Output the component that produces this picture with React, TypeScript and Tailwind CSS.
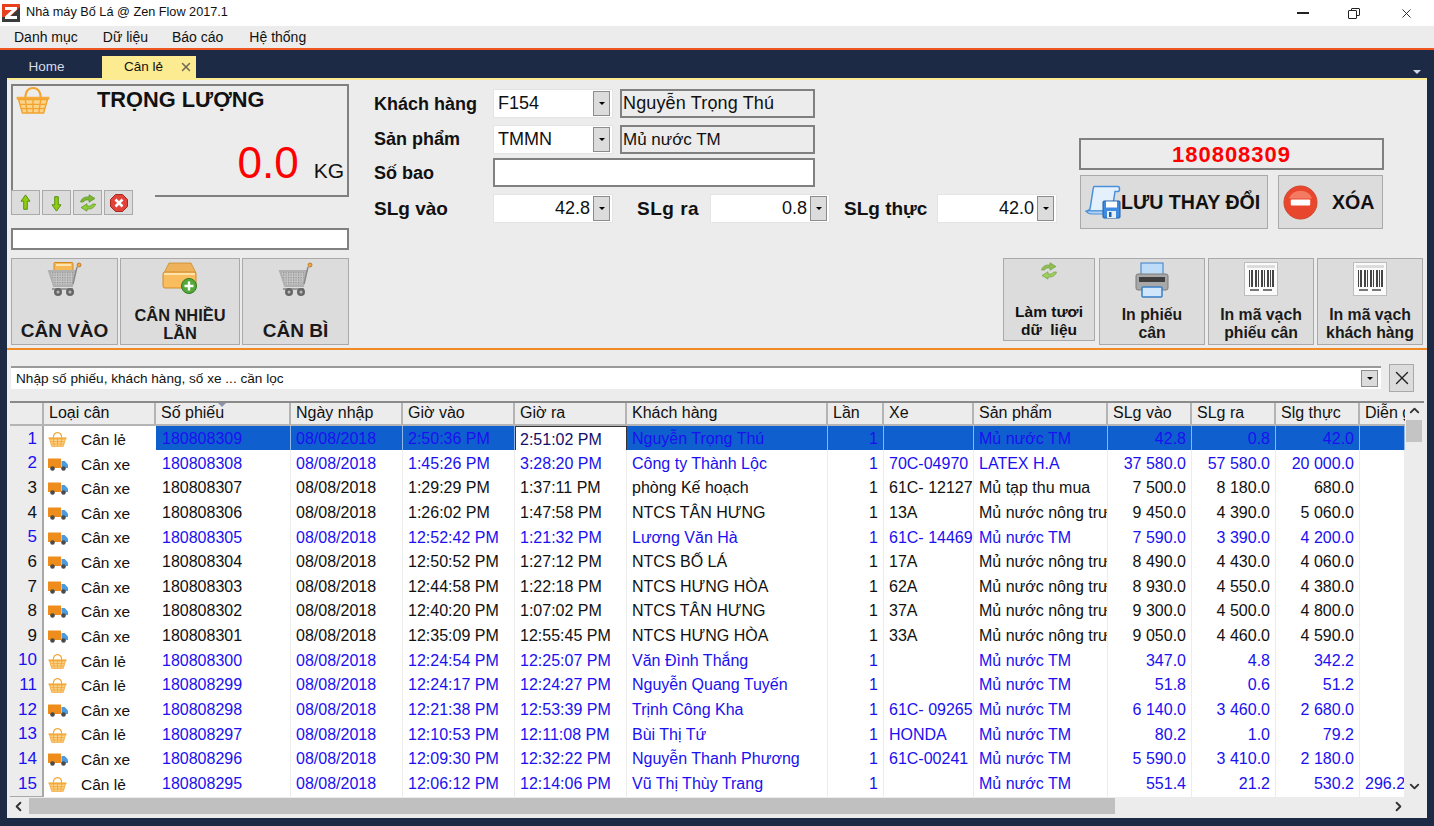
import { useId } from "react";
import { ChevronDown, ChevronLeft, ChevronRight, ChevronUp, X } from "lucide-react";

const sans = { fontFamily: '"Liberation Sans", Arial, sans-serif' };

function Logo() {
  return (
    <svg viewBox="0 0 18 18" className="h-[18px] w-[18px] shrink-0">
      <rect width="18" height="18" fill="#3a3a3a" />
      <path d="M0 0h18v3L8 13H0z" fill="#e8401f" />
      <path d="M3 3h12v2.500L8 12h7v3H3v-2.500L10 6H3z" fill="#fff" />
    </svg>
  );
}

function Basket({ className }: { className?: string }) {
  return (
    <svg viewBox="0 0 36 28" className={className} fill="none">
      <path d="M10 12C10 3 14 1 18 1s8 2 8 11" stroke="#f2a32e" strokeWidth="2" />
      <path d="M1 10h34v3H1z" fill="#f5ab3c" />
      <path d="M3 13h30l-4 14H7z" fill="#fbd38a" stroke="#f2a32e" strokeWidth="1.5" />
      <path d="M10 13l2 14M18 13v14M26 13l-2 14M5 18h26M6 22.500h24" stroke="#f2a32e" strokeWidth="1.4" />
    </svg>
  );
}

function Truck() {
  return (
    <svg viewBox="0 0 20 13" className="h-[13px] w-[20px]">
      <rect x="0" y="0.500" width="13" height="9.500" rx="0.500" fill="#ee8d1b" />
      <path d="M13.500 3h3.200L20 6.500V10h-6.500z" fill="#4d9bdf" />
      <circle cx="4.500" cy="10.500" r="2.300" fill="#4a4a4a" />
      <circle cx="15.500" cy="10.500" r="2.300" fill="#4a4a4a" />
    </svg>
  );
}

function ArrowBtn({ dir }: { dir: "up" | "down" }) {
  const d =
    dir === "up"
      ? "M7 1 12 8H9v9H5V8H2z"
      : "M7 19 12 12H9V3H5v9H2z";
  return (
    <svg viewBox="0 0 14 20" className="h-[18px] w-[13px]">
      <path d={d} fill="#8fcc12" stroke="#4d8a0a" strokeWidth="1" />
    </svg>
  );
}

function RefreshIcon({ className }: { className?: string }) {
  return (
    <svg viewBox="0 0 20 18" className={className} fill="none">
      <path d="M2.500 8C3.500 4 7 2.500 11 3V0.800L17 4.500 11 8.300V6C8 5.600 6 6.300 5.500 8z" fill="#7cb82f" stroke="#4f8a1a" strokeWidth="0.6" />
      <path d="M17.500 10C16.500 14 13 15.500 9 15v2.200L3 13.500 9 9.700V12c3 .4 5-.3 5.500-2z" fill="#8fcc3a" stroke="#4f8a1a" strokeWidth="0.6" />
    </svg>
  );
}

function StopIcon() {
  return (
    <svg viewBox="0 0 18 18" className="h-[18px] w-[18px]">
      <path d="M5.500 0.500h7l5 5v7l-5 5h-7l-5-5v-7z" fill="#e0433a" stroke="#a8281f" />
      <path d="M5.500 5.500l7 7m0-7l-7 7" stroke="#fff" strokeWidth="2.600" />
    </svg>
  );
}

function Cart({ loaded }: { loaded?: boolean }) {
  const id = useId();
  return (
    <svg viewBox="0 0 36 36" className="h-[36px] w-[36px]">
      <defs>
        <pattern id={id} width="2.500" height="2.500" patternUnits="userSpaceOnUse">
          <rect width="2.500" height="2.500" fill="#c4c4c4" />
          <rect width="1.200" height="1.200" fill="#8e8e8e" />
        </pattern>
      </defs>
      {loaded && (
        <>
          <rect x="7" y="0.500" width="19" height="8" rx="1" fill="#f7b955" stroke="#d18a2a" />
          <rect x="9" y="2" width="15" height="2" fill="#fde3ae" />
        </>
      )}
      <path d="M2 9h26l-3 15H7z" fill={`url(#${id})`} stroke="#b0b0b0" strokeWidth="2" />
      <path d="M26 22 30 5" stroke="#8a8a8a" strokeWidth="1.500" />
      <circle cx="32" cy="3" r="2" fill="#f3a73c" stroke="#a9661a" strokeWidth="0.700" />
      <path d="M5 27h21" stroke="#9a9a9a" strokeWidth="2" />
      <circle cx="11" cy="30" r="4" fill="#666" />
      <circle cx="11" cy="30" r="1.500" fill="#bbb" />
      <circle cx="23" cy="30" r="4" fill="#666" />
      <circle cx="23" cy="30" r="1.500" fill="#bbb" />
    </svg>
  );
}

function BoxPlus() {
  return (
    <svg viewBox="0 0 36 32" className="h-[32px] w-[36px]">
      <path d="M2 11 7 1h22l5 10-16 2z" fill="#eeb25a" stroke="#c98a2e" strokeWidth="0.800" />
      <rect x="1" y="10" width="33" height="16" rx="2" fill="#f9bd5f" stroke="#d08c2c" />
      <path d="M2 11h31v2H2z" fill="#fde2a9" />
      <circle cx="27" cy="24" r="7.500" fill="#52a93a" stroke="#2f7a1f" />
      <path d="M27 19.500v9M22.500 24h9" stroke="#fff" strokeWidth="2.400" />
    </svg>
  );
}

function ScrollSave() {
  return (
    <svg viewBox="0 0 36 34" className="h-[34px] w-[36px]">
      <path d="M9 1.500h24c2 0 2 5 0 5h-3L27 26H2l3-2L8 5c.3-2 .5-3.500 1-3.500z" fill="#e4f0fb" stroke="#4a90d9" strokeWidth="1.500" />
      <path d="M1 26c2 3 4 3 6 3h14v-3z" fill="#b7d3f0" stroke="#4a90d9" strokeWidth="1.200" />
      <rect x="18" y="16" width="17" height="17" rx="1" fill="#3f8be0" stroke="#1f5fa8" />
      <rect x="21" y="16.500" width="11" height="6" fill="#fff" />
      <rect x="22" y="26" width="9" height="7" fill="#e4eef8" />
      <rect x="24" y="27" width="2.500" height="5" fill="#1f5fa8" />
    </svg>
  );
}

function MinusCircle() {
  return (
    <svg viewBox="0 0 36 36" className="h-[35px] w-[35px]">
      <circle cx="18" cy="18" r="17" fill="#e8472e" stroke="#d0442c" />
      <path d="M6 14A13 13 0 0 1 30 14z" fill="#f47b62" />
      <rect x="8" y="15" width="20" height="6" rx="1" fill="#fff" />
    </svg>
  );
}

function Printer() {
  return (
    <svg viewBox="0 0 36 36" className="h-[36px] w-[36px]">
      <rect x="7" y="1" width="22" height="15" fill="#bcdcf8" stroke="#3a7fc4" />
      <rect x="2" y="12" width="32" height="16" rx="2" fill="#a8a8a8" stroke="#7d7d7d" />
      <rect x="5" y="15" width="26" height="5" fill="#3f3f3f" />
      <rect x="8" y="25" width="20" height="10" rx="1" fill="#cfe6fb" stroke="#3a7fc4" strokeWidth="1.500" />
    </svg>
  );
}

function Barcode() {
  const bars = [1, 3, 4, 7, 8, 10, 13, 14, 16, 19, 20, 22, 24, 25];
  return (
    <svg viewBox="0 0 34 34" className="h-[34px] w-[34px]">
      <rect x="0.500" y="0.500" width="33" height="33" fill="#fafafa" stroke="#bdbdbd" />
      <rect x="3" y="3" width="28" height="3" fill="#dcdcdc" />
      {bars.map((b) => (
        <rect key={b} x={b + 4} y="8" width="1" height="17" fill="#444" />
      ))}
      <path d="M6 28h9M19 28h9" stroke="#777" strokeWidth="2" />
    </svg>
  );
}

function DropBtn() {
  return (
    <span className="flex h-[25px] w-[17px] shrink-0 items-center justify-center border border-[#8c8c8c] bg-[#dcdcdc]">
      <span className="h-0 w-0 border-x-[3px] border-t-[3px] border-x-transparent border-t-black" />
    </span>
  );
}

function Combo({ value, right }: { value: string; right?: boolean }) {
  return (
    <div className="flex h-[29px] w-[120px] shrink-0 items-center border border-[#e4e4e4] bg-white pl-1 pr-[2px] text-[18px] font-normal">
      <span className={`flex-1 pr-[3px] ${right ? "text-right" : ""}`}>{value}</span>
      <DropBtn />
    </div>
  );
}

function ActionBtn({ icon, label, w, textClass }: { icon: React.ReactNode; label: string; w: string; textClass: string }) {
  return (
    <div className={`flex h-[87px] flex-col items-center border border-[#a9a9a9] bg-[#dcdcdc] ${w}`}>
      <div className="flex h-[42px] shrink-0 items-start pt-[3px]">{icon}</div>
      <div className={`flex flex-1 items-end justify-center pb-[2px] text-center font-bold text-[#1a1a1a] ${textClass}`}>
        <span className="whitespace-pre-line">{label}</span>
      </div>
    </div>
  );
}

type Row = [string, string, string, string, string, string, string, string, string, string, string, string];

// loai, phieu, gio vao, gio ra, khach, lan, xe, san pham, vao, ra, thuc, dien giai
const rows: { blue: boolean; r: Row }[] = [
  { blue: true, r: ["le", "180808309", "2:50:36 PM", "2:51:02 PM", "Nguyễn Trọng Thú", "1", "", "Mủ nước TM", "42.8", "0.8", "42.0", ""] },
  { blue: true, r: ["xe", "180808308", "1:45:26 PM", "3:28:20 PM", "Công ty Thành Lộc", "1", "70C-04970", "LATEX H.A", "37 580.0", "57 580.0", "20 000.0", ""] },
  { blue: false, r: ["xe", "180808307", "1:29:29 PM", "1:37:11 PM", "phòng Kế hoạch", "1", "61C- 12127", "Mủ tạp thu mua", "7 500.0", "8 180.0", "680.0", ""] },
  { blue: false, r: ["xe", "180808306", "1:26:02 PM", "1:47:58 PM", "NTCS TÂN HƯNG", "1", "13A", "Mủ nước nông trườ", "9 450.0", "4 390.0", "5 060.0", ""] },
  { blue: true, r: ["xe", "180808305", "12:52:42 PM", "1:21:32 PM", "Lương Văn Hà", "1", "61C- 14469", "Mủ nước TM", "7 590.0", "3 390.0", "4 200.0", ""] },
  { blue: false, r: ["xe", "180808304", "12:50:52 PM", "1:27:12 PM", "NTCS BỐ LÁ", "1", "17A", "Mủ nước nông trườ", "8 490.0", "4 430.0", "4 060.0", ""] },
  { blue: false, r: ["xe", "180808303", "12:44:58 PM", "1:22:18 PM", "NTCS HƯNG HÒA", "1", "62A", "Mủ nước nông trườ", "8 930.0", "4 550.0", "4 380.0", ""] },
  { blue: false, r: ["xe", "180808302", "12:40:20 PM", "1:07:02 PM", "NTCS TÂN HƯNG", "1", "37A", "Mủ nước nông trườ", "9 300.0", "4 500.0", "4 800.0", ""] },
  { blue: false, r: ["xe", "180808301", "12:35:09 PM", "12:55:45 PM", "NTCS HƯNG HÒA", "1", "33A", "Mủ nước nông trườ", "9 050.0", "4 460.0", "4 590.0", ""] },
  { blue: true, r: ["le", "180808300", "12:24:54 PM", "12:25:07 PM", "Văn Đình Thắng", "1", "", "Mủ nước TM", "347.0", "4.8", "342.2", ""] },
  { blue: true, r: ["le", "180808299", "12:24:17 PM", "12:24:27 PM", "Nguyễn Quang Tuyến", "1", "", "Mủ nước TM", "51.8", "0.6", "51.2", ""] },
  { blue: true, r: ["xe", "180808298", "12:21:38 PM", "12:53:39 PM", "Trịnh Công Kha", "1", "61C- 09265", "Mủ nước TM", "6 140.0", "3 460.0", "2 680.0", ""] },
  { blue: true, r: ["le", "180808297", "12:10:53 PM", "12:11:08 PM", "Bùi Thị Tứ", "1", "HONDA", "Mủ nước TM", "80.2", "1.0", "79.2", ""] },
  { blue: true, r: ["xe", "180808296", "12:09:30 PM", "12:32:22 PM", "Nguyễn Thanh Phương", "1", "61C-00241", "Mủ nước TM", "5 590.0", "3 410.0", "2 180.0", ""] },
  { blue: true, r: ["le", "180808295", "12:06:12 PM", "12:14:06 PM", "Vũ Thị Thùy Trang", "1", "", "Mủ nước TM", "551.4", "21.2", "530.2", "296.2"] },
];

const gridCols =
  "grid grid-cols-[34px_112px_135px_112px_112px_112px_201px_56px_90px_134px_84px_84px_84px_45px]";

const headers = ["", "Loại cân", "Số phiếu", "Ngày nhập", "Giờ vào", "Giờ ra", "Khách hàng", "Lần", "Xe", "Sản phẩm", "SLg vào", "SLg ra", "Slg thực", "Diễn giải"];

function Cell({ children, right, selected, color }: { children?: React.ReactNode; right?: boolean; selected?: boolean; color: string }) {
  return (
    <div
      className={`flex items-center overflow-hidden whitespace-nowrap border-b border-r pl-[5px] pr-[5px] ${right ? "justify-end" : ""} ${selected ? "border-[#8fb6e8] bg-[#0f5fcf]" : "border-[#ececec] bg-white"} ${color}`}
    >
      {children}
    </div>
  );
}

function DataRow({ index, blue, r }: { index: number; blue: boolean; r: Row }) {
  const selected = index === 0;
  const color = blue ? "text-[#1a10f0]" : "text-[#111]";
  const [loai, phieu, vao, ra, khach, lan, xe, sp, slVao, slRa, slThuc, dien] = r;
  return (
    <div className={`${gridCols} h-[24.64px] text-[16px]`}>
      <div className={`flex items-center justify-end border-b-2 border-r-2 border-[#a8a8a8] bg-[#ececec] pr-[5px] text-[17px] ${color}`}>{index + 1}</div>
      <div className="flex items-center bg-white pl-[3px] text-[15.500px] text-[#111]">
        <span className="flex w-[34px] shrink-0 items-center pl-[1px]">
          {loai === "le" ? <Basket className="h-[15px] w-[19px]" /> : <Truck />}
        </span>
        {loai === "le" ? "Cân lẻ" : "Cân xe"}
      </div>
      <Cell selected={selected} color={color}><span className="pl-[1px]">{phieu}</span></Cell>
      <Cell selected={selected} color={color}>08/08/2018</Cell>
      <Cell selected={selected} color={color}>{vao}</Cell>
      {selected ? (
        <div className="flex items-center overflow-hidden whitespace-nowrap border border-[#333] bg-white pl-[4px] text-[#14106a]">{ra}</div>
      ) : (
        <Cell color={color}>{ra}</Cell>
      )}
      <Cell selected={selected} color={color}>{khach}</Cell>
      <Cell right selected={selected} color={color}>{lan}</Cell>
      <Cell selected={selected} color={color}>{xe}</Cell>
      <Cell selected={selected} color={color}>{sp}</Cell>
      <Cell right selected={selected} color={color}>{slVao}</Cell>
      <Cell right selected={selected} color={color}>{slRa}</Cell>
      <Cell right selected={selected} color={color}>{slThuc}</Cell>
      <Cell selected={selected} color={color}>{dien}</Cell>
    </div>
  );
}

export default function App() {
  return (
    <div style={sans} className="flex h-[826px] w-[1434px] flex-col overflow-hidden bg-[#1c2a45] text-[#111]">
      {/* Title bar */}
      <div className="flex h-[26px] shrink-0 items-center bg-white pl-[2px] text-[12.700px]">
        <Logo />
        <span className="ml-[6px] flex-1">Nhà máy Bố Lá @ Zen Flow 2017.1</span>
        <span className="flex w-[54px] justify-center">
          <span className="h-[1.500px] w-[12px] bg-[#222]" />
        </span>
        <span className="flex w-[48px] justify-center">
          <span className="relative h-[11px] w-[12px]">
            <span className="absolute right-0 top-0 h-[8px] w-[9px] rounded-[1px] border border-[#222]" />
            <span className="absolute bottom-0 left-0 h-[9px] w-[9px] rounded-[1px] border border-[#222] bg-white" />
          </span>
        </span>
        <span className="flex w-[56px] justify-center">
          <X className="h-[15px] w-[15px] text-[#222]" strokeWidth={1.500} />
        </span>
      </div>

      {/* Menu */}
      <div className="flex h-[22px] shrink-0 items-center bg-[#ececec] pl-[14px] text-[14px]">
        <span>Danh mục</span>
        <span className="ml-[25px]">Dữ liệu</span>
        <span className="ml-[24px]">Báo cáo</span>
        <span className="ml-[26px]">Hệ thống</span>
      </div>
      <div className="h-[2px] shrink-0 bg-[#f0561f]" />

      {/* Tabs */}
      <div className="flex h-[28px] shrink-0 items-end pl-[7px]">
        <span className="flex h-[22px] w-[95px] items-center justify-center pr-[16px] text-[13.500px] text-[#d6dce8]">Home</span>
        <span className="flex h-[22px] w-[94px] items-center whitespace-nowrap bg-[#fdeb91] pl-[22px] text-[13.500px]">
          Cân lẻ
          <X className="ml-[16px] h-[14px] w-[14px] shrink-0 text-[#6f6a55]" strokeWidth={2.500} />
        </span>
        <span className="mb-[4px] ml-auto mr-[13px] h-0 w-0 border-x-[4px] border-t-[4px] border-x-transparent border-t-[#cfd6e4]" />
      </div>

      {/* Workspace */}
      <div className="mx-[7px] flex h-[740px] flex-col border-t-2 border-[#fdeb91] bg-[#ececec]">
        <div className="flex h-[269px] shrink-0 pl-[4px] pt-[4px]">
          {/* Left column */}
          <div className="flex w-[338px] shrink-0 flex-col">
            <div className="relative h-[113px] border-2 border-b-0 border-[#808080] bg-[#ececec]">
              <span className="absolute bottom-0 right-[-2px] h-[2px] w-[194px] bg-[#808080]" />
              <div className="pl-[2px] pt-[1px]">
                <Basket className="h-[27px] w-[36px]" />
              </div>
              <div className="absolute left-[84px] top-0 text-[21.800px] font-bold leading-[28px]">TRỌNG LƯỢNG</div>
              <div className="absolute right-[3px] top-[49px] flex items-baseline gap-[15px]">
                <span className="text-[44px] leading-[56px] text-[#ff0000]">0.0</span>
                <span className="text-[21px]">KG</span>
              </div>
              <div className="absolute left-[-2px] top-[104px] flex gap-[2px]">
                {[<ArrowBtn dir="up" key="up" />, <ArrowBtn dir="down" key="down" />, <RefreshIcon className="h-[18px] w-[20px]" key="r" />, <StopIcon key="s" />].map((ic, i) => (
                  <span key={i} className="flex h-[25px] w-[29px] items-center justify-center border border-[#a9a9a9] bg-[#dcdcdc]">
                    {ic}
                  </span>
                ))}
              </div>
            </div>
            <div className="mt-[31px] h-[22px] border-2 border-[#808080] bg-white" />
            <div className="mt-[8px] flex gap-[2px]">
              <ActionBtn icon={<Cart loaded />} label="CÂN VÀO" w="w-[107px]" textClass="text-[19px] leading-[22px]" />
              <ActionBtn icon={<BoxPlus />} label={"CÂN NHIỀU\nLẦN"} w="w-[120px]" textClass="text-[16.400px] leading-[18px]" />
              <ActionBtn icon={<Cart />} label="CÂN BÌ" w="w-[107px]" textClass="text-[19px] leading-[22px]" />
            </div>
          </div>

          {/* Right part */}
          <div className="flex min-w-0 flex-1 flex-col">
            <div className="flex h-[174px] shrink-0">
              {/* Form */}
              <div className="ml-[25px] flex w-[683px] shrink-0 flex-col pt-[5px] text-[18px] font-bold">
                <div className="flex h-[29px] items-center">
                  <span className="w-[119px] shrink-0 pt-[1px]">Khách hàng</span>
                  <Combo value="F154" />
                  <div className="ml-[7px] flex h-[29px] w-[195px] items-center border-2 border-[#808080] bg-[#ececec] pl-[1px] text-[18px] font-normal tracking-[0.150px]">Nguyễn Trọng Thú</div>
                </div>
                <div className="mt-[7px] flex h-[29px] items-center">
                  <span className="w-[119px] shrink-0">Sản phẩm</span>
                  <Combo value="TMMN" />
                  <div className="ml-[7px] flex h-[29px] w-[195px] items-center border-2 border-[#808080] bg-[#ececec] pl-[1px] text-[17px] font-normal">Mủ nước TM</div>
                </div>
                <div className="mt-[4px] flex h-[29px] items-center">
                  <span className="w-[119px] shrink-0 pt-[1px]">Số bao</span>
                  <div className="h-[29px] w-[322px] border-2 border-[#808080] bg-white" />
                </div>
                <div className="mt-[7px] flex h-[29px] items-center text-[19px]">
                  <span className="w-[119px] shrink-0 pt-[1px]">SLg vào</span>
                  <Combo value="42.8" right />
                  <span className="ml-[24px] w-[73px] shrink-0 pt-[1px] tracking-[0.500px]">SLg ra</span>
                  <Combo value="0.8" right />
                  <span className="ml-[14px] w-[93px] shrink-0 pt-[1px]">SLg thực</span>
                  <Combo value="42.0" right />
                </div>
              </div>

              {/* Serial and save */}
              <div className="ml-[22px] flex w-[305px] shrink-0 flex-col pt-[54px]">
                <div className="flex h-[32px] items-center justify-center border-2 border-[#808080] bg-[#ececec] text-[22px] font-bold tracking-[1px] text-[#ff0000]">180808309</div>
                <div className="mt-[5px] flex h-[54px] justify-between px-[1px]">
                  <div className="flex w-[188px] items-center border border-[#a9a9a9] bg-[#dcdcdc] pl-[4px] text-[19.600px] font-bold">
                    <ScrollSave />
                    <span className="pt-[1px]">LƯU THAY ĐỔI</span>
                  </div>
                  <div className="flex w-[105px] items-center border border-[#a9a9a9] bg-[#dcdcdc] pl-[4px] text-[19.600px] font-bold">
                    <MinusCircle />
                    <span className="ml-[14px] pt-[1px]">XÓA</span>
                  </div>
                </div>
              </div>
            </div>

            {/* Lower action buttons */}
            <div className="flex justify-end gap-[3px] pr-[4px]">
              <div className="mr-[1px] flex h-[83px] w-[92px] flex-col items-center border border-[#a9a9a9] bg-[#dcdcdc]">
                <div className="flex h-[42px] shrink-0 items-start pt-[3px]"><RefreshIcon className="h-[18px] w-[20px] opacity-80" /></div>
                <div className="mt-auto whitespace-pre pb-[1px] text-center text-[15.500px] font-bold leading-[18px]">{"Làm tươi\ndữ  liệu"}</div>
              </div>
              <ActionBtn icon={<Printer />} label={"In phiếu\ncân"} w="w-[106px]" textClass="text-[15.800px] leading-[18px]" />
              <ActionBtn icon={<Barcode />} label={"In mã vạch\nphiếu cân"} w="w-[106px]" textClass="text-[15.800px] leading-[18px]" />
              <ActionBtn icon={<Barcode />} label={"In mã vạch\nkhách hàng"} w="w-[106px]" textClass="text-[15.800px] leading-[18px]" />
            </div>
          </div>
        </div>

        <div className="mt-[-1px] h-[2px] shrink-0 bg-[#f08a24]" />

        {/* Filter */}
        <div className="flex h-[51px] shrink-0 items-start pl-[4px] pt-[16px]">
          <div className="flex h-[23px] w-[1370px] items-center border-t-2 border-[#9a9a9a] bg-white pl-[5px] pr-[3px] text-[13.600px]">
            <span className="flex-1 pt-[1px]">Nhập số phiếu, khách hàng, số xe ... cần lọc</span>
            <span className="flex h-[17px] w-[17px] items-center justify-center border border-[#8c8c8c] bg-[#dcdcdc]">
              <span className="h-0 w-0 border-x-[3px] border-t-[3px] border-x-transparent border-t-black" />
            </span>
          </div>
          <span className="ml-[8px] mt-[-2px] flex h-[28px] w-[25px] items-center justify-center border border-[#a9a9a9] bg-[#dcdcdc]">
            <X className="h-[22px] w-[22px] text-[#222]" strokeWidth={1.500} />
          </span>
        </div>

        {/* Grid */}
        <div className="mx-[3px] flex min-h-0 flex-1 flex-col border-t-2 border-[#8a8a8a]">
          <div className="flex min-h-0 flex-1">
            <div className="w-[1395px] shrink-0 overflow-hidden">
              <div className={`${gridCols} h-[22.800px] text-[16px]`}>
                {headers.map((h, i) => (
                  <div key={i} className={`relative flex items-center overflow-hidden whitespace-nowrap border-b-2 border-[#b4b4b4] bg-[#ececec] pl-[5px] ${i === 13 ? "" : "border-r-2"}`}>
                    {h}
                    {i === 2 && (
                      <span className="absolute left-[62px] top-0 h-0 w-0 border-x-[4px] border-t-[4px] border-x-transparent border-t-[#8a93a8]" />
                    )}
                  </div>
                ))}
              </div>
              {rows.map((row, i) => (
                <DataRow key={row.r[1]} index={i} blue={row.blue} r={row.r} />
              ))}
            </div>
            {/* Vertical scrollbar */}
            <div className="flex w-[18px] shrink-0 flex-col items-center bg-[#ececec]">
              <ChevronUp className="h-[15px] w-[15px] shrink-0 text-[#333]" strokeWidth={3} />
              <div className="mt-[2px] h-[22px] w-[16px] bg-[#c4c4c4]" />
              <ChevronDown className="mb-[3px] mt-auto h-[15px] w-[15px] text-[#333]" strokeWidth={3} />
            </div>
          </div>
          {/* Horizontal scrollbar */}
          <div className="flex h-[18px] shrink-0 items-center bg-[#ececec]">
            <ChevronLeft className="ml-[1px] h-[15px] w-[15px] shrink-0 text-[#333]" strokeWidth={3} />
            <div className="ml-[3px] h-[16px] w-[1086px] bg-[#c0c0c0]" />
            <ChevronRight className="ml-auto mr-[18px] h-[15px] w-[15px] text-[#333]" strokeWidth={3} />
          </div>
        </div>
        <div className="h-[3px] shrink-0" />
      </div>
    </div>
  );
}
